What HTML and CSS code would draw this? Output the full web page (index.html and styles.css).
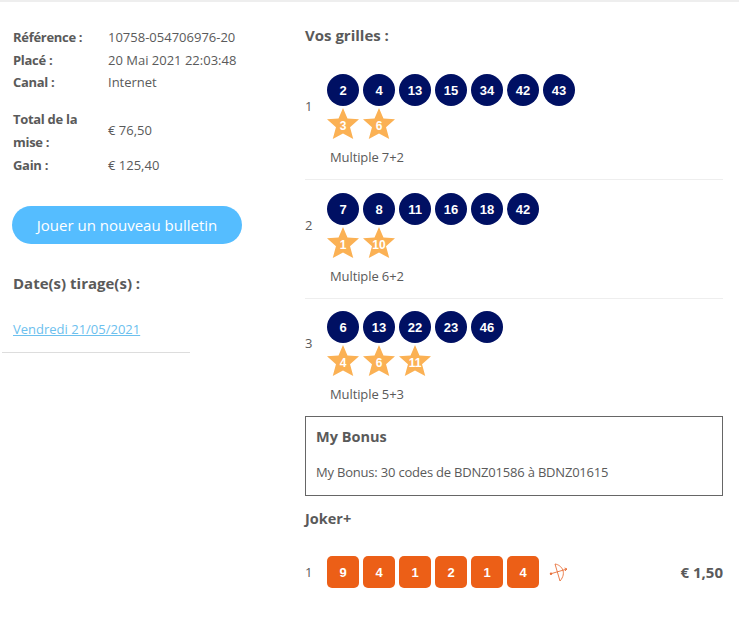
FILE: index.html
```html
<!DOCTYPE html>
<html lang="fr">
<head>
  <meta charset="UTF-8">
  <meta name="viewport" content="width=device-width, initial-scale=1.0">
  <title>Détail du bulletin</title>
  <link rel="stylesheet" href="styles.css">
</head>
<body>
  <div class="page">
    <div class="summary">
      <div class="info">
        <div class="info-label">Référence :</div><div class="info-value">10758-054706976-20</div>
        <div class="info-label">Placé :</div><div class="info-value">20 Mai 2021 22:03:48</div>
        <div class="info-label">Canal :</div><div class="info-value">Internet</div>
      </div>
      <div class="info info-money">
        <div class="info-label">Total de la mise :</div><div class="info-value">€ 76,50</div>
        <div class="info-label">Gain :</div><div class="info-value">€ 125,40</div>
      </div>
      <a class="play-btn" href="#">Jouer un nouveau bulletin</a>
      <h2 class="dates-title">Date(s) tirage(s) :</h2>
      <a class="draw-link" href="#">Vendredi 21/05/2021</a>
      <div class="summary-line"></div>
    </div>

    <div class="grids">
      <h2 class="grids-title">Vos grilles :</h2>

      <div class="grid-row">
        <div class="grid-top">
          <div class="grid-num">1</div>
          <div>
            <div class="balls">
              <span class="ball">2</span><span class="ball">4</span><span class="ball">13</span><span class="ball">15</span><span class="ball">34</span><span class="ball">42</span><span class="ball">43</span>
            </div>
            <div class="balls">
              <span class="star">3</span><span class="star">6</span>
            </div>
          </div>
        </div>
        <div class="grid-type">Multiple 7+2</div>
      </div>

      <div class="grid-row">
        <div class="grid-top">
          <div class="grid-num">2</div>
          <div>
            <div class="balls">
              <span class="ball">7</span><span class="ball">8</span><span class="ball">11</span><span class="ball">16</span><span class="ball">18</span><span class="ball">42</span>
            </div>
            <div class="balls">
              <span class="star">1</span><span class="star">10</span>
            </div>
          </div>
        </div>
        <div class="grid-type">Multiple 6+2</div>
      </div>

      <div class="grid-row grid-row-last">
        <div class="grid-top">
          <div class="grid-num">3</div>
          <div>
            <div class="balls">
              <span class="ball">6</span><span class="ball">13</span><span class="ball">22</span><span class="ball">23</span><span class="ball">46</span>
            </div>
            <div class="balls">
              <span class="star">4</span><span class="star">6</span><span class="star">11</span>
            </div>
          </div>
        </div>
        <div class="grid-type">Multiple 5+3</div>
      </div>

      <div class="bonus">
        <h3 class="bonus-title">My Bonus</h3>
        <div class="bonus-text">My Bonus: 30 codes de BDNZ01586 à BDNZ01615</div>
      </div>

      <h3 class="joker-title">Joker+</h3>
      <div class="joker-row">
        <div class="grid-num">1</div>
        <div class="balls">
          <span class="tile">9</span><span class="tile">4</span><span class="tile">1</span><span class="tile">2</span><span class="tile">1</span><span class="tile">4</span>
        </div>
        <svg class="bow" width="20" height="28" viewBox="0 0 20 28" fill="none" stroke="#e8703a" stroke-width="0.9">
          <path d="M6 6 C13 7 18 15 11 23"/>
          <path d="M6 6 L11 23"/>
          <path d="M1 16 L18 11"/>
          <path d="M18 11 L15.5 10 M18 11 L16 13"/>
          <circle cx="2" cy="15.8" r="1.2" fill="#e8703a" stroke="none"/>
        </svg>
        <div class="joker-price">€ 1,50</div>
      </div>
    </div>
  </div>
</body>
</html>
```

FILE: styles.css
```css
body {
  margin: 0;
  background-color: #fff;
  color: #5a5a5a;
  font-family: "Open Sans", sans-serif;
  font-size: 13px;
  border-top: 2px solid #eee;
}

.page {
  display: flex;
  align-items: flex-start;
}

h2, h3 {
  margin: 0;
  font-weight: bold;
}

.summary {
  width: 188px;
  margin-left: 2px;
  padding-top: 24px;
  flex-shrink: 0;
}

.info {
  display: grid;
  grid-template-columns: 95px 1fr;
  width: 240px;
  margin-left: 11px;
  line-height: 22.5px;
  align-items: center;
}

.info-money {
  margin-top: 14px;
  line-height: 23px;
}

.info-label {
  font-weight: bold;
  letter-spacing: -0.3px;
}

.play-btn {
  display: block;
  width: 230px;
  height: 38px;
  margin: 29px 0 0 10px;
  border-radius: 19px;
  background-color: #55bdff;
  color: #fff;
  font-size: 15px;
  line-height: 38px;
  text-align: center;
  text-decoration: none;
}

.dates-title {
  margin: 27px 0 0 11px;
  font-size: 15px;
  line-height: 24px;
}

.draw-link {
  display: block;
  margin: 24px 0 0 11px;
  color: #6cc0ee;
  line-height: 20px;
}

.summary-line {
  margin-top: 13px;
  border-top: 1px solid #ddd;
}

.grids {
  width: 418px;
  margin-left: 115px;
  padding-top: 21px;
}

.grids-title {
  font-size: 15px;
  line-height: 24px;
  margin-bottom: 27px;
}

.grid-row {
  padding-bottom: 12px;
  border-bottom: 1px solid #eee;
  margin-bottom: 13px;
}

.grid-row-last {
  border-bottom: none;
  margin-top: -1px;
  margin-bottom: 0;
}

.grid-top {
  display: flex;
  align-items: center;
}

.grid-top .grid-num {
  padding-bottom: 5px;
}

.grid-num {
  width: 22px;
  flex-shrink: 0;
}

.balls {
  display: flex;
  gap: 4px;
  margin-bottom: 2px;
}

.ball, .star, .tile {
  display: flex;
  align-items: center;
  justify-content: center;
  width: 32px;
  height: 32px;
  color: #fff;
  font-family: "Liberation Sans", sans-serif;
  font-size: 13px;
  font-weight: bold;
}

.ball {
  border-radius: 50%;
  background-color: #001063;
}

.star {
  box-sizing: border-box;
  padding-top: 4px;
  background-color: #fbb154;
  font-size: 12px;
  clip-path: polygon(50% 0, 64% 33%, 100% 35%, 72% 60%, 82% 97%, 50% 80%, 18% 97%, 28% 60%, 0 35%, 36% 33%);
}

.tile {
  border-radius: 5px;
  background-color: #ec5f17;
}

.grid-type {
  margin: 5px 0 0 25px;
  line-height: 20px;
  letter-spacing: -0.1px;
}

.bonus {
  height: 78px;
  padding: 0 10px;
  border: 1px solid #666;
}

.bonus-title {
  margin-top: 8px;
  font-size: 14.5px;
  line-height: 24px;
}

.bonus-text {
  margin-top: 13px;
  line-height: 20px;
  letter-spacing: -0.2px;
}

.joker-title {
  margin-top: 11px;
  font-size: 14.5px;
  line-height: 24px;
}

.joker-row {
  display: flex;
  align-items: center;
  margin-top: 25px;
}

.joker-row .balls {
  margin-bottom: 0;
}

.bow {
  margin-left: 10px;
}

.joker-price {
  margin-left: auto;
  font-size: 15px;
  font-weight: bold;
}
```
